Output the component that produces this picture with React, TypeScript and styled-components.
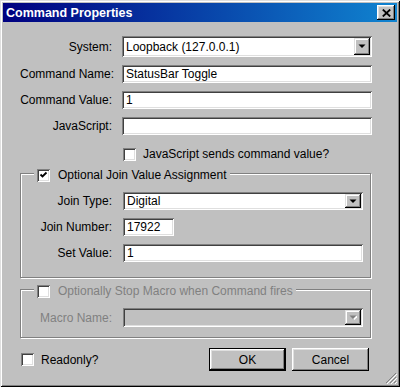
import React from 'react';
import styled, { createGlobalStyle } from 'styled-components';

const GlobalStyle = createGlobalStyle`
  html, body { margin: 0; padding: 0; background: #c0c0c0; }
  body { font-family: "Liberation Sans", Arial, sans-serif; font-size: 12px; color: #000; }
  * { box-sizing: border-box; }
`;

const Window = styled.div`
  position: relative;
  width: 400px;
  height: 387px;
  background: #c0c0c0;
  padding: 3px;
  display: flex;
  flex-direction: column;
  box-shadow: inset 1px 1px 0 #dfdfdf, inset -1px -1px 0 #000, inset 2px 2px 0 #fff, inset -2px -2px 0 #808080;
`;

const TitleBar = styled.div`
  height: 19px;
  display: flex;
  align-items: center;
  justify-content: space-between;
  padding: 0 2px 0 3px;
  background: linear-gradient(90deg, #000080, #1084d0);
  color: #fff;
  font-weight: bold;
  font-size: 12.5px;
`;

const CloseButton = styled.div`
  width: 18px;
  height: 15px;
  display: flex;
  align-items: center;
  justify-content: center;
  background: #c0c0c0;
  box-shadow: inset -1px -1px 0 #000, inset 1px 1px 0 #fff, inset -2px -2px 0 #808080, inset 2px 2px 0 #dfdfdf;
`;

const Body = styled.div`
  flex: 1;
  display: flex;
  flex-direction: column;
  padding: 14px 25px 0 17px;
`;

const FormGrid = styled.div<{ $label: number; $gap: number; $mt?: number }>`
  display: grid;
  grid-template-columns: ${p => p.$label}px 1fr;
  column-gap: ${p => p.$gap}px;
  row-gap: 8px;
  align-items: center;
  margin-top: ${p => p.$mt ?? 0}px;
`;

const Label = styled.label<{ $disabled?: boolean }>`
  text-align: right;
  white-space: nowrap;
  color: ${p => (p.$disabled ? '#808080' : '#000')};
`;

const TextBox = styled.input<{ $width?: number }>`
  height: 18px;
  width: ${p => (p.$width ? `${p.$width}px` : '100%')};
  justify-self: start;
  border: none;
  outline: none;
  margin: 0;
  padding: 0 0 0 4px;
  font: inherit;
  color: #000;
  background: #fff;
  box-shadow: inset 1px 1px 0 #808080, inset -1px -1px 0 #fff, inset 2px 2px 0 #404040, inset -2px -2px 0 #dfdfdf;
`;

const Combo = styled.div<{ $height: number; $disabled?: boolean }>`
  height: ${p => p.$height}px;
  display: flex;
  align-items: stretch;
  padding: 2px;
  background: ${p => (p.$disabled ? '#c0c0c0' : '#fff')};
  box-shadow: inset 1px 1px 0 #808080, inset -1px -1px 0 #fff, inset 2px 2px 0 #404040, inset -2px -2px 0 #dfdfdf;
`;

const ComboText = styled.div`
  flex: 1;
  display: flex;
  align-items: center;
  padding-left: 2px;
  white-space: nowrap;
`;

const DropButton = styled.div`
  width: 16px;
  display: flex;
  align-items: center;
  justify-content: center;
  background: #c0c0c0;
  box-shadow: inset -1px -1px 0 #000, inset 1px 1px 0 #dfdfdf, inset -2px -2px 0 #808080, inset 2px 2px 0 #fff;
`;

const CheckBox = styled.div`
  width: 13px;
  height: 13px;
  flex: none;
  display: flex;
  align-items: center;
  justify-content: center;
  background: #fff;
  box-shadow: inset 1px 1px 0 #808080, inset -1px -1px 0 #fff, inset 2px 2px 0 #404040, inset -2px -2px 0 #dfdfdf;
`;

const CheckRow = styled.div<{ $gap: number; $mt?: number; $ml?: number }>`
  display: flex;
  align-items: center;
  gap: ${p => p.$gap}px;
  margin-top: ${p => p.$mt ?? 0}px;
  margin-left: ${p => p.$ml ?? 0}px;
  white-space: nowrap;
`;

const GroupBox = styled.div<{ $mt: number; $pb: number }>`
  margin-top: ${p => p.$mt}px;
  margin-right: 1px;
  border: 1px solid #808080;
  box-shadow: inset 1px 1px 0 #fff, 1px 1px 0 #fff;
  padding: 0 7px ${p => p.$pb}px 0;
`;

const GroupLegend = styled.div<{ $disabled?: boolean }>`
  display: flex;
  align-items: center;
  gap: 8px;
  width: fit-content;
  height: 14px;
  margin: -6px 0 0 13px;
  padding: 0 3px;
  background: #c0c0c0;
  white-space: nowrap;
  color: ${p => (p.$disabled ? '#808080' : '#000')};
`;

const Footer = styled.div`
  margin-top: 10px;
  display: flex;
  align-items: center;
  justify-content: space-between;
  padding: 0 3px 0 1px;
`;

const ButtonGroup = styled.div`
  display: flex;
  gap: 6px;
`;

const PushButton = styled.div<{ $default?: boolean }>`
  width: 77px;
  height: 23px;
  display: flex;
  align-items: center;
  justify-content: center;
  background: #c0c0c0;
  border: ${p => (p.$default ? '1px solid #000' : 'none')};
  box-shadow: inset -1px -1px 0 #000, inset 1px 1px 0 #fff, inset -2px -2px 0 #808080, inset 2px 2px 0 #dfdfdf;
`;

const Grip = styled.svg`
  position: absolute;
  right: 3px;
  bottom: 3px;
`;

const Arrow = ({ disabled }: { disabled?: boolean }) => (
  <svg width="8" height="5" viewBox="0 0 8 5">
    {disabled && <polygon points="2,1 9,1 5.5,5" fill="#fff" />}
    <polygon points="0.5,0.5 7.5,0.5 4,4" fill={disabled ? '#808080' : '#000'} />
  </svg>
);

const Check = () => (
  <svg width="9" height="9" viewBox="0 0 9 9">
    <path d="M1.5 3.5 L3.5 5.5 L7.5 1.5" stroke="#000" strokeWidth="1.8" fill="none" />
  </svg>
);

const Select = ({ value, height, disabled }: { value?: string; height: number; disabled?: boolean }) => (
  <Combo $height={height} $disabled={disabled}>
    <ComboText>{value}</ComboText>
    <DropButton>
      <Arrow disabled={disabled} />
    </DropButton>
  </Combo>
);

export default function App() {
  return (
    <>
      <GlobalStyle />
      <Window>
        <TitleBar>
          <span>Command Properties</span>
          <CloseButton>
            <svg width="9" height="8" viewBox="0 0 9 8">
              <path d="M0.8 0.5 L8.2 7.5 M8.2 0.5 L0.8 7.5" stroke="#000" strokeWidth="1.8" />
            </svg>
          </CloseButton>
        </TitleBar>
        <Body>
          <FormGrid $label={92} $gap={10}>
            <Label>System:</Label>
            <Select value="Loopback (127.0.0.1)" height={21} />
            <Label>Command Name:</Label>
            <TextBox readOnly defaultValue="StatusBar Toggle" />
            <Label>Command Value:</Label>
            <TextBox readOnly defaultValue="1" />
            <Label>JavaScript:</Label>
            <TextBox readOnly defaultValue="" />
            <span />
            <CheckRow $gap={7} $mt={4} $ml={1}>
              <CheckBox />
              <span>JavaScript sends command value?</span>
            </CheckRow>
          </FormGrid>

          <GroupBox $mt={12} $pb={15}>
            <GroupLegend>
              <CheckBox>
                <Check />
              </CheckBox>
              <span>Optional Join Value Assignment</span>
            </GroupLegend>
            <FormGrid $label={91} $gap={11} $mt={10}>
              <Label>Join Type:</Label>
              <Select value="Digital" height={18} />
              <Label>Join Number:</Label>
              <TextBox readOnly defaultValue="17922" $width={51} />
              <Label>Set Value:</Label>
              <TextBox readOnly defaultValue="1" />
            </FormGrid>
          </GroupBox>

          <GroupBox $mt={11} $pb={10}>
            <GroupLegend $disabled>
              <CheckBox />
              <span>Optionally Stop Macro when Command fires</span>
            </GroupLegend>
            <FormGrid $label={91} $gap={11} $mt={10}>
              <Label $disabled>Macro Name:</Label>
              <Select height={19} disabled />
            </FormGrid>
          </GroupBox>

          <Footer>
            <CheckRow $gap={7}>
              <CheckBox />
              <span>Readonly?</span>
            </CheckRow>
            <ButtonGroup>
              <PushButton $default>OK</PushButton>
              <PushButton>Cancel</PushButton>
            </ButtonGroup>
          </Footer>
        </Body>
        <Grip width="12" height="12" viewBox="0 0 12 12">
          <path d="M11 1 L1 11 M11 5 L5 11 M11 9 L9 11" stroke="#808080" strokeWidth="1" />
          <path d="M12 2 L2 12 M12 6 L6 12 M12 10 L10 12" stroke="#fff" strokeWidth="1" />
        </Grip>
      </Window>
    </>
  );
}
